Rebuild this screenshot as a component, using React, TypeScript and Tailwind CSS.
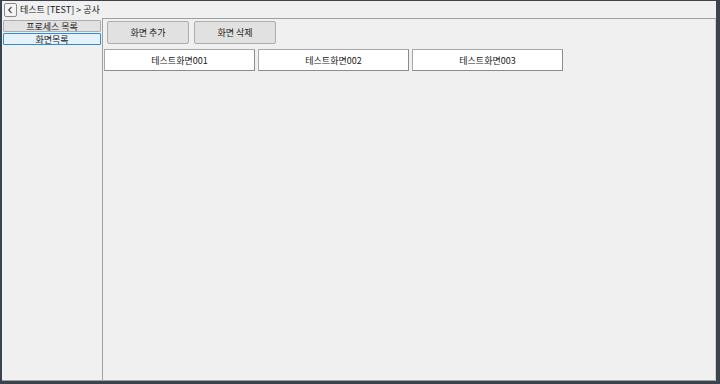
export default function App() {
  const screens = ["테스트화면001", "테스트화면002", "테스트화면003"];

  return (
    <div className="w-[720px] h-[384px] bg-[#3b444d] pt-px pl-[2px] pr-[4px] pb-[3px] font-['Noto_Sans_CJK_KR','Noto_Sans',sans-serif] text-[9px] text-[#1a1a1a]">
      <div className="w-full h-full bg-[#f0f0f0] flex flex-col">
        {/* header */}
        <div className="h-[17px] flex items-center shrink-0">
          <button className="ml-[2px] w-[13px] h-[14px] flex items-center justify-center border border-[#8a8a8a] rounded-[2px] bg-[#f4f4f4]">
            <svg width="7" height="8" viewBox="0 0 7 8">
              <path d="M4.5 1 L1.8 4 L4.5 7" fill="none" stroke="#222" strokeWidth="1.1" />
            </svg>
          </button>
          <span className="ml-[3px] leading-none">테스트 [TEST] &gt; 공사</span>
        </div>

        <div className="flex flex-1 min-h-0">
          {/* sidebar */}
          <div className="w-[100px] shrink-0 flex flex-col gap-px pt-[2px] pl-px border-b border-[#a0a0a0]">
            <button className="h-[12px] w-[98px] flex items-center justify-center border border-[#adadad] bg-[#e1e1e1] rounded-[1px] leading-none">
              프로세스 목록
            </button>
            <button className="h-[12px] w-[98px] flex items-center justify-center border border-[#2b8fd8] bg-[#e5f1fb] rounded-[1px] leading-none">
              화면목록
            </button>
          </div>

          {/* main */}
          <div className="flex-1 border border-[#a0a0a0] border-r-[#d0d0d0] bg-[#f0f0f0] flex flex-col">
            <div className="flex gap-[5px] pl-[4px] pt-[2px]">
              <button className="w-[82px] h-[23px] flex items-center justify-center border border-[#adadad] bg-[#e1e1e1] rounded-[2px] leading-none">
                화면 추가
              </button>
              <button className="w-[82px] h-[23px] flex items-center justify-center border border-[#adadad] bg-[#e1e1e1] rounded-[2px] leading-none">
                화면 삭제
              </button>
            </div>
            <div className="flex gap-[3px] pl-px mt-[5px]">
              {screens.map((s) => (
                <div
                  key={s}
                  className="w-[151px] h-[22px] flex items-center justify-center bg-white border border-[#a8a8a8] border-r-[#8c8c8c] border-b-[#8c8c8c] leading-none"
                >
                  {s}
                </div>
              ))}
            </div>
          </div>
        </div>
      </div>
    </div>
  );
}
